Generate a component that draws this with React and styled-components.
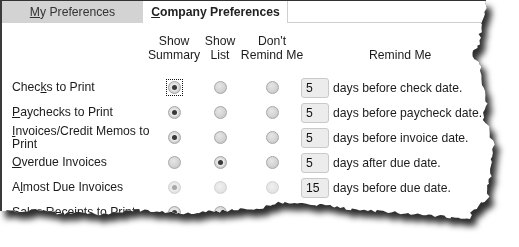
import React from "react";
import styled, { createGlobalStyle, css } from "styled-components";

const Global = createGlobalStyle`
  html, body { margin: 0; padding: 0; background: #fff; }
  body { font-family: "Liberation Sans", Arial, sans-serif; }
`;

/* ---- torn paper outline (a drawing of the edge) ---- */
function makeTear() {
  let seed = 7;
  const rnd = () => {
    seed = (seed * 16807) % 2147483647;
    return (seed / 2147483647) * 2 - 1;
  };
  const right = [
    [487, -2], [486, 8], [482, 20], [480, 34], [478, 46], [471, 56], [479, 62],
    [481, 74], [483, 88], [486, 104], [483, 116], [489, 130], [495, 148],
    [490, 160], [492, 172], [488, 186], [489, 199], [477, 205], [471, 212], [470, 219],
  ];
  const bottom = [
    [470, 219], [455, 218], [440, 216], [420, 215], [400, 213], [375, 211],
    [350, 209], [320, 205], [300, 203], [285, 202], [272, 204], [262, 208],
    [250, 210], [240, 209], [225, 211], [205, 212], [185, 214], [170, 213],
    [150, 211], [135, 210], [120, 213], [100, 214], [80, 213], [60, 214],
    [48, 212], [38, 209], [25, 211], [12, 211], [-2, 211],
  ];
  const pts = [[-2, -2]];
  const walk = (list, amp) => {
    for (let i = 0; i < list.length - 1; i++) {
      const [x0, y0] = list[i];
      const [x1, y1] = list[i + 1];
      const d = Math.hypot(x1 - x0, y1 - y0);
      const n = Math.max(1, Math.round(d / 3));
      for (let k = 0; k < n; k++) {
        const t = k / n;
        const jx = i === 0 && k === 0 ? 0 : rnd() * amp;
        const jy = i === 0 && k === 0 ? 0 : rnd() * amp;
        pts.push([x0 + (x1 - x0) * t + jx, y0 + (y1 - y0) * t + jy]);
      }
    }
  };
  walk(right, 1.8);
  walk(bottom, 1.4);
  pts.push([-2, 211]);
  return "polygon(" + pts.map(([x, y]) => `${x.toFixed(1)}px ${y.toFixed(1)}px`).join(", ") + ")";
}
const TEAR = makeTear();

const Frame = styled.div`
  width: 519px;
  height: 247px;
  overflow: hidden;
  background: #fff;
  position: relative;
`;

const Paper = styled.div`
  width: 519px;
  height: 247px;
  filter: drop-shadow(0.6px 0.6px 0 #222) drop-shadow(5px 7px 3px rgba(0, 0, 0, 0.82));
`;

const Sheet = styled.div`
  width: 519px;
  height: 247px;
  box-sizing: border-box;
  background: #fff;
  border-top: 1px solid #333;
  border-left: 2px solid #3a3a3a;
  clip-path: ${TEAR};
  color: #1c1c1c;
  font-size: 12.2px;
`;

/* ---- tabs ---- */
const TabBar = styled.div`
  display: flex;
  height: 22px;
`;

const Tab = styled.div`
  box-sizing: border-box;
  display: flex;
  align-items: center;
  justify-content: center;
  height: 22px;
  font-size: 12.2px;
  white-space: nowrap;
  ${(p) =>
    p.$active
      ? css`
          width: 144px;
          margin-left: 1px;
          background: #fff;
          border-right: 1px solid #cfcfcf;
          font-weight: bold;
          color: #222;
        `
      : css`
          width: 141px;
          background: #d3d3d3;
          color: #333;
        `}
`;

const TabFill = styled.div`
  flex: 1;
  border-bottom: 1px solid #cfcfcf;
  height: 21px;
`;

/* ---- grid ---- */
const Grid = styled.div`
  display: grid;
  grid-template-columns: 145px 34px 58px 46px 34px 1fr;
  grid-template-rows: 41px repeat(6, 25px);
  padding: 11px 0 0 10px;
`;

const HeadCell = styled.div`
  display: flex;
  flex-direction: column;
  align-items: ${(p) => (p.$start ? "flex-start" : "center")};
  justify-content: ${(p) => (p.$bottom ? "flex-end" : "flex-start")};
  height: 28px;
  line-height: 14px;
  white-space: nowrap;
  text-align: center;
  padding-left: ${(p) => p.$indent || 0}px;
  align-self: start;
`;

const Label = styled.div`
  align-self: center;
  line-height: 13px;
  padding-right: 4px;
`;

const Cell = styled.div`
  display: flex;
  align-items: center;
  justify-content: center;
  width: 100%;
`;

const Focus = styled.span`
  display: inline-flex;
  padding: 2px;
  outline: 1px dotted #111;
  outline-offset: -1px;
`;

const Radio = styled.span`
  position: relative;
  display: inline-block;
  width: 13px;
  height: 13px;
  box-sizing: border-box;
  border-radius: 50%;
  border: 1px solid ${(p) => (p.$disabled ? "#d0d0d0" : "#a6a6a6")};
  background: ${(p) =>
    p.$disabled
      ? "radial-gradient(circle at 45% 40%, #f0f0f0 0%, #e2e2e2 70%, #d8d8d8 100%)"
      : "radial-gradient(circle at 40% 35%, #e6e6e6 0%, #d2d2d2 60%, #bdbdbd 100%)"};
  ${(p) =>
    p.$checked &&
    css`
      &::after {
        content: "";
        position: absolute;
        left: 50%;
        top: 50%;
        width: 5px;
        height: 5px;
        margin: -2.5px 0 0 -2.5px;
        border-radius: 50%;
        background: ${p.$disabled ? "#a8a8a8" : "#3a3a3a"};
        box-shadow: 0 0 0 1.5px ${p.$disabled ? "#ececec" : "#e8e8e8"};
      }
    `}
`;

const NumBox = styled.div`
  justify-self: end;
  align-self: center;
  width: 28px;
  height: 20px;
  box-sizing: border-box;
  display: flex;
  align-items: center;
  padding-left: 4px;
  border: 1px solid #c9c9c9;
  border-radius: 3px;
  background: #ececec;
  font-size: 12.2px;
  color: #111;
`;

const DaysText = styled.div`
  align-self: center;
  padding-left: 4px;
  white-space: nowrap;
`;

const rows = [
  { label: <>Chec<u>k</u>s to Print</>, sel: 0, focus: true, days: "5", text: "days before check date." },
  { label: <><u>P</u>aychecks to Print</>, sel: 0, days: "5", text: "days before paycheck date." },
  { label: <><u>I</u>nvoices/Credit Memos to Print</>, sel: 0, days: "5", text: "days before invoice date." },
  { label: <><u>O</u>verdue Invoices</>, sel: 1, days: "5", text: "days after due date." },
  { label: <>A<u>l</u>most Due Invoices</>, sel: 0, disabled: true, days: "15", text: "days before due date." },
  { label: <>Sales Receipts to Print</>, sel: 0 },
];

function RadioCell({ checked, disabled, focus }) {
  const r = <Radio $checked={checked} $disabled={disabled} />;
  return <Cell>{focus ? <Focus>{r}</Focus> : r}</Cell>;
}

export default function App() {
  return (
    <>
      <Global />
      <Frame>
        <Paper>
          <Sheet>
            <TabBar>
              <Tab>
                <span>
                  <u>M</u>y Preferences
                </span>
              </Tab>
              <Tab $active>
                <span>
                  <u>C</u>ompany Preferences
                </span>
              </Tab>
              <TabFill />
            </TabBar>
            <Grid>
              <div />
              <HeadCell>
                <span>Show</span>
                <span>Summary</span>
              </HeadCell>
              <HeadCell>
                <span>Show</span>
                <span>List</span>
              </HeadCell>
              <HeadCell>
                <span>Don't</span>
                <span>Remind Me</span>
              </HeadCell>
              <div />
              <HeadCell $bottom $start $indent={40}>
                <span>Remind Me</span>
              </HeadCell>
              {rows.map((r, i) => (
                <React.Fragment key={i}>
                  <Label>{r.label}</Label>
                  {[0, 1, 2].map((c) => (
                    <RadioCell
                      key={c}
                      checked={r.sel === c}
                      disabled={r.disabled}
                      focus={r.focus && c === 0}
                    />
                  ))}
                  {r.days ? <NumBox>{r.days}</NumBox> : <div />}
                  {r.text ? <DaysText>{r.text}</DaysText> : <div />}
                </React.Fragment>
              ))}
            </Grid>
          </Sheet>
        </Paper>
      </Frame>
    </>
  );
}
